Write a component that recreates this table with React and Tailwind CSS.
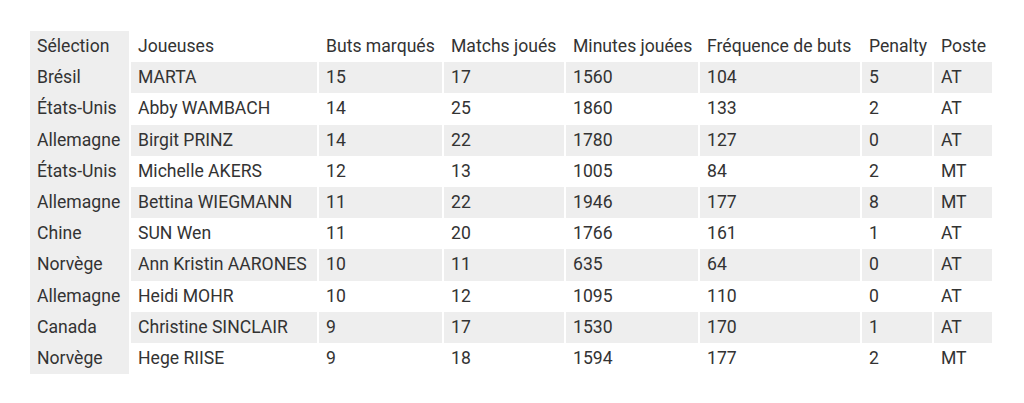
const columns = [
  { label: 'Sélection', width: 'w-[99px]' },
  { label: 'Joueuses', width: 'w-[186px]' },
  { label: 'Buts marqués', width: 'w-[123px]' },
  { label: 'Matchs joués', width: 'w-[120px]' },
  { label: 'Minutes jouées', width: 'w-[132px]' },
  { label: 'Fréquence de buts', width: 'w-[160px]' },
  { label: 'Penalty', width: 'w-[70px]' },
  { label: 'Poste', width: 'w-[58px]' },
];

const rows = [
  ['Brésil', 'MARTA', 15, 17, 1560, 104, 5, 'AT'],
  ['États-Unis', 'Abby WAMBACH', 14, 25, 1860, 133, 2, 'AT'],
  ['Allemagne', 'Birgit PRINZ', 14, 22, 1780, 127, 0, 'AT'],
  ['États-Unis', 'Michelle AKERS', 12, 13, 1005, 84, 2, 'MT'],
  ['Allemagne', 'Bettina WIEGMANN', 11, 22, 1946, 177, 8, 'MT'],
  ['Chine', 'SUN Wen', 11, 20, 1766, 161, 1, 'AT'],
  ['Norvège', 'Ann Kristin AARONES', 10, 11, 635, 64, 0, 'AT'],
  ['Allemagne', 'Heidi MOHR', 10, 12, 1095, 110, 0, 'AT'],
  ['Canada', 'Christine SINCLAIR', 9, 17, 1530, 170, 1, 'AT'],
  ['Norvège', 'Hege RIISE', 9, 18, 1594, 177, 2, 'MT'],
];

export default function App() {
  return (
    <div className="bg-white pl-[28px] pt-[31px] text-[17.6px] leading-[21.2px] text-[#333333]" style={{ fontFamily: 'Roboto, "Noto Sans", sans-serif' }}>
      <table className="w-[966px] table-fixed border-separate border-spacing-x-[2px] border-spacing-y-0">
        <colgroup>
          {columns.map((c) => (
            <col key={c.label} className={c.width} />
          ))}
        </colgroup>
        <thead>
          <tr>
            {columns.map((c, i) => (
              <th
                key={c.label}
                className={`px-[7px] py-[5px] text-left font-normal whitespace-nowrap ${i === 0 ? 'bg-[#eeeeee]' : ''}`}
              >
                {c.label}
              </th>
            ))}
          </tr>
        </thead>
        <tbody>
          {rows.map((row, r) => (
            <tr key={r} className={r % 2 === 0 ? 'bg-[#eeeeee]' : ''}>
              {row.map((cell, i) =>
                i === 0 ? (
                  <th key={i} className="bg-[#eeeeee] px-[7px] py-[5px] text-left font-normal whitespace-nowrap">
                    {cell}
                  </th>
                ) : (
                  <td key={i} className="px-[7px] py-[5px] whitespace-nowrap">
                    {cell}
                  </td>
                )
              )}
            </tr>
          ))}
        </tbody>
      </table>
    </div>
  );
}
